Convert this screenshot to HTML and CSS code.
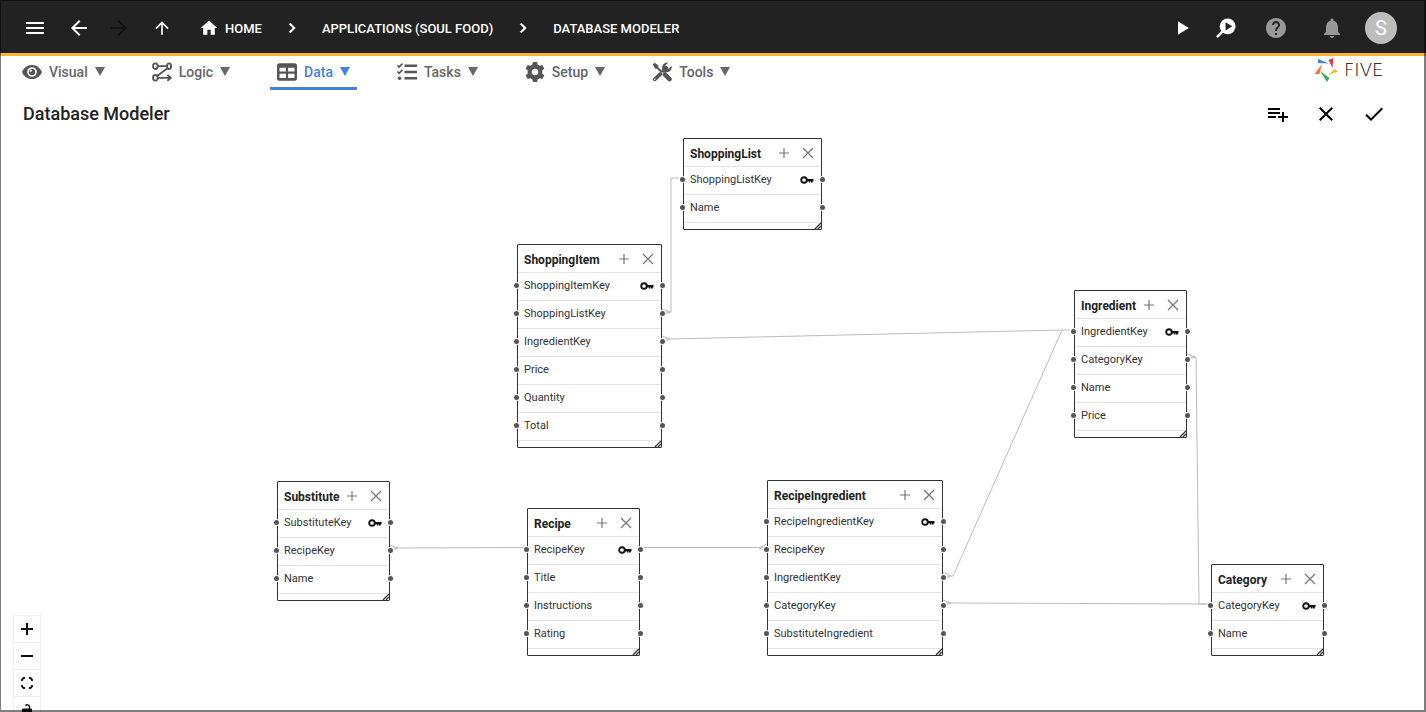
FILE: index.html
```html
<!DOCTYPE html>
<html lang="en">
<head>
<meta charset="utf-8">
<meta name="viewport" content="width=device-width, initial-scale=1">
<title>Database Modeler</title>
<link rel="stylesheet" href="styles.css">
</head>
<body>
<svg class="sprite" aria-hidden="true">
  <symbol id="i-menu" viewBox="0 0 24 24"><path d="M3 18h18v-2H3v2zm0-5h18v-2H3v2zm0-7v2h18V6H3z"/></symbol>
  <symbol id="i-back" viewBox="0 0 24 24"><path d="M20 11H7.83l5.59-5.59L12 4l-8 8 8 8 1.41-1.41L7.83 13H20v-2z"/></symbol>
  <symbol id="i-forward" viewBox="0 0 24 24"><path d="M12 4l-1.410 1.410L16.170 11H4v2h12.170l-5.580 5.590L12 20l8-8z"/></symbol>
  <symbol id="i-up" viewBox="0 0 24 24"><path d="M4 12l1.410 1.410L11 7.830V20h2V7.830l5.580 5.590L20 12l-8-8-8 8z"/></symbol>
  <symbol id="i-home" viewBox="0 0 24 24"><path d="M10 20v-6h4v6h5v-8h3L12 3 2 12h3v8z"/></symbol>
  <symbol id="i-chevron" viewBox="0 0 24 24"><path d="M10 6L8.590 7.410 13.170 12l-4.580 4.590L10 18l6-6z" stroke="currentColor" stroke-width=".6"/></symbol>
  <symbol id="i-play" viewBox="0 0 24 24"><path d="M6 4v16l13-8z"/></symbol>
  <symbol id="i-inspect" viewBox="0 0 24 24"><circle cx="14" cy="10" r="9.500"/><path d="M8 16l-6 6" stroke="currentColor" stroke-width="3" stroke-linecap="round"/><path d="M11.500 5l8 5-8 5z" fill="#222"/></symbol>
  <symbol id="i-help" viewBox="0 0 24 24"><path d="M12 2C6.480 2 2 6.480 2 12s4.480 10 10 10 10-4.480 10-10S17.520 2 12 2zm1 17h-2v-2h2v2zm2.070-7.750l-.9.920C13.450 12.900 13 13.500 13 15h-2v-.5c0-1.100.450-2.100 1.170-2.830l1.240-1.260c.370-.360.590-.860.590-1.410 0-1.100-.9-2-2-2s-2 .9-2 2H8c0-2.210 1.790-4 4-4s4 1.790 4 4c0 .880-.360 1.680-.930 2.250z"/></symbol>
  <symbol id="i-bell" viewBox="0 0 24 24"><path d="M12 22c1.100 0 2-.9 2-2h-4c0 1.100.9 2 2 2zm6-6v-5c0-3.070-1.640-5.640-4.500-6.320V4c0-.830-.670-1.500-1.500-1.500s-1.500.670-1.500 1.500v.680C7.630 5.360 6 7.920 6 11v5l-2 2v1h16v-1l-2-2z"/></symbol>
  <symbol id="i-eye" viewBox="0 0 24 24"><path fill-rule="evenodd" d="M12 3.500C6 3.500 1.800 7.600 0 12c1.800 4.400 6 8.500 12 8.500S22.200 16.400 24 12C22.200 7.600 18 3.500 12 3.500zm0 2.700a5.800 5.800 0 1 1 0 11.600 5.800 5.800 0 0 1 0-11.600z"/><circle cx="12" cy="12" r="3.800"/><circle cx="10.500" cy="10.500" r="1.400" fill="#fff"/></symbol>
  <symbol id="i-logic" viewBox="0 0 24 24"><g fill="none" stroke="currentColor" stroke-width="2.200"><ellipse cx="4" cy="5" rx="2.800" ry="3.400"/><ellipse cx="20.500" cy="5" rx="2.400" ry="3.400"/><ellipse cx="4" cy="19" rx="2.800" ry="3.400"/><path d="M7 5h11M18.500 7.500L6.500 16.500M7 19h15M18.500 15.500L22.500 19l-4 3.500"/></g></symbol>
  <symbol id="i-table" viewBox="0 0 24 24"><path fill-rule="evenodd" d="M3 1.500h18a3 3 0 0 1 3 3v15a3 3 0 0 1-3 3H3a3 3 0 0 1-3-3v-15a3 3 0 0 1 3-3zM3 7v4.500h7.700V7zm10.300 0v4.500H21V7zM3 14.200v5h7.700v-5zm10.300 0v5H21v-5z"/></symbol>
  <symbol id="i-tasks" viewBox="0 0 24 24"><path d="M9 3h15v3H9zM9 10.500h15v3H9zM9 18h15v3H9z"/><circle cx="3" cy="19.500" r="2.200"/><path d="M.5 4l2 2L6.500 2M.5 11.500l2 2 4-4" fill="none" stroke="currentColor" stroke-width="2"/></symbol>
  <symbol id="i-gear" viewBox="0 0 24 24"><path fill-rule="evenodd" d="M9.500 0h5l.7 3.300 2.300 1.300 3.200-1 2.500 4.300-2.500 2.300v3.600l2.500 2.300-2.500 4.300-3.200-1-2.300 1.300-.7 3.300h-5l-.7-3.300-2.300-1.300-3.200 1L.8 16.100l2.500-2.300v-3.600L.8 7.900l2.500-4.300 3.200 1 2.300-1.300zM12 8a4 4 0 1 0 0 8 4 4 0 0 0 0-8z"/></symbol>
  <symbol id="i-tools" viewBox="0 0 24 24"><path d="M1 3l2.200-2.200L7.500 4v2.300l5 5-1.700 1.700-5-5H3.700z"/><path d="M15.500 15l5.500 5.500" stroke="currentColor" stroke-width="5.500" stroke-linecap="round"/><path d="M3.200 20.800L10 14.500M13.500 10.500L17 7" stroke="currentColor" stroke-width="4.500" stroke-linecap="round"/><path d="M19.500.8a6 6 0 0 0-7 7.700l3 3.500a6.200 6.200 0 0 0 8-7.300l-3.700 3.500-3.200-.8-.7-3.200z"/><circle cx="3.300" cy="20.700" r="1" fill="#fff"/></symbol>
  <symbol id="i-listadd" viewBox="0 0 24 24"><path d="M14 10H2v2h12v-2zm0-4H2v2h12V6zm4 8v-4h-2v4h-4v2h4v4h2v-4h4v-2h-4zM2 16h8v-2H2v2z"/></symbol>
  <symbol id="i-close" viewBox="0 0 24 24"><path d="M19 6.410L17.590 5 12 10.590 6.410 5 5 6.410 10.590 12 5 17.590 6.410 19 12 13.410 17.590 19 19 17.590 13.410 12z"/></symbol>
  <symbol id="i-check" viewBox="0 0 24 24"><path d="M9 16.170L4.830 12l-1.420 1.410L9 19 21 7l-1.410-1.410z"/></symbol>
  <symbol id="i-plus" viewBox="0 0 12 12"><path d="M6 1v10M1 6h10" stroke="currentColor" stroke-width="1.200" fill="none"/></symbol>
  <symbol id="i-x" viewBox="0 0 12 12"><path d="M1 1l10 10M11 1L1 11" stroke="currentColor" stroke-width="1.300" fill="none"/></symbol>
  <symbol id="i-key" viewBox="0 0 14 10"><circle cx="4" cy="5" r="2.800" fill="none" stroke="currentColor" stroke-width="1.900"/><path d="M6.500 4H13.500v2.200h-.7v1.300h-2V6.200h-.6v1.300H8.800V6.200H6.500z"/></symbol>
  <symbol id="i-grip" viewBox="0 0 8 8"><path d="M2 8L8 2M5 8L8 5" stroke="currentColor" stroke-width="1.200" fill="none"/></symbol>
</svg>

<div class="app">
  <header class="topbar">
    <button class="bar-btn" aria-label="Menu"><svg><use href="#i-menu"/></svg></button>
    <button class="bar-btn back" aria-label="Back"><svg><use href="#i-back"/></svg></button>
    <button class="bar-btn forward" aria-label="Forward" disabled><svg><use href="#i-forward"/></svg></button>
    <button class="bar-btn up" aria-label="Up"><svg><use href="#i-up"/></svg></button>
    <nav class="crumbs" aria-label="Breadcrumb">
      <a href="#" class="crumb"><svg><use href="#i-home"/></svg>HOME</a>
      <svg class="sep"><use href="#i-chevron"/></svg>
      <a href="#" class="crumb">APPLICATIONS (SOUL FOOD)</a>
      <svg class="sep"><use href="#i-chevron"/></svg>
      <a href="#" class="crumb">DATABASE MODELER</a>
    </nav>
    <div class="bar-actions">
      <button class="bar-btn small" aria-label="Run"><svg><use href="#i-play"/></svg></button>
      <button class="bar-btn small inspect" aria-label="Inspect"><svg><use href="#i-inspect"/></svg></button>
      <button class="bar-btn muted" aria-label="Help"><svg><use href="#i-help"/></svg></button>
      <button class="bar-btn muted bell" aria-label="Notifications"><svg><use href="#i-bell"/></svg></button>
      <button class="avatar" aria-label="Account">S</button>
    </div>
  </header>

  <div class="menubar">
    <nav class="tabs" aria-label="Main">
      <button class="tab"><svg><use href="#i-eye"/></svg><span>Visual</span><i class="caret"></i></button>
      <button class="tab"><svg><use href="#i-logic"/></svg><span>Logic</span><i class="caret"></i></button>
      <button class="tab active"><svg><use href="#i-table"/></svg><span>Data</span><i class="caret"></i></button>
      <button class="tab"><svg><use href="#i-tasks"/></svg><span>Tasks</span><i class="caret"></i></button>
      <button class="tab"><svg><use href="#i-gear"/></svg><span>Setup</span><i class="caret"></i></button>
      <button class="tab"><svg><use href="#i-tools"/></svg><span>Tools</span><i class="caret"></i></button>
    </nav>
    <div class="brand">
      <svg viewBox="0 0 24 24" aria-hidden="true">
        <path fill="#3f83d8" d="M4 1l11 4.500L4 5z"/>
        <path fill="#e23b3b" d="M14.500 2L19.500 0 18.500 10z"/>
        <path fill="#fdb62b" d="M21 11l3 2.500-10.500 3.500z"/>
        <path fill="#3fa75a" d="M6 13l9.500 7-2.500 4z"/>
        <path fill="#f47b2d" d="M8 6L5.500 16H.5z"/>
      </svg>
      <span>FIVE</span>
    </div>
  </div>

  <div class="titlebar">
    <h1>Database Modeler</h1>
    <div class="title-actions">
      <button class="act" aria-label="Add table"><svg><use href="#i-listadd"/></svg></button>
      <button class="act" aria-label="Cancel"><svg><use href="#i-close"/></svg></button>
      <button class="act" aria-label="Save"><svg><use href="#i-check"/></svg></button>
    </div>
  </div>

  <main class="canvas">
    <svg class="edges" aria-hidden="true">
      <path d="M682 40H671V174H662M662 171l8 3-8 3"/>
      <path d="M662 201H670L1062 192H1074M662 198l8 3-8 3"/>
      <path d="M943 438H953L1062 192M943 434l8 4-8 3"/>
      <path d="M1187 219H1196L1199 466H1211M1187 216l8 3-8 3"/>
      <path d="M390 410H398L527 409.500M390 407l8 3-8 3"/>
      <path d="M640 409.500H767M767 406l-8 4 8 3"/>
      <path d="M943 465H951L1211 466M943 462l8 3-8 3"/>
    </svg>

    <section class="node shopping-list">
      <header><h2>ShoppingList</h2><button aria-label="Add field"><svg><use href="#i-plus"/></svg></button><button aria-label="Remove table"><svg><use href="#i-x"/></svg></button></header>
      <ul><li>ShoppingListKey<svg><use href="#i-key"/></svg></li><li>Name</li></ul>
      <svg class="grip"><use href="#i-grip"/></svg>
    </section>
    <section class="node shopping-item">
      <header><h2>ShoppingItem</h2><button aria-label="Add field"><svg><use href="#i-plus"/></svg></button><button aria-label="Remove table"><svg><use href="#i-x"/></svg></button></header>
      <ul><li>ShoppingItemKey<svg><use href="#i-key"/></svg></li><li>ShoppingListKey</li><li>IngredientKey</li><li>Price</li><li>Quantity</li><li>Total</li></ul>
      <svg class="grip"><use href="#i-grip"/></svg>
    </section>
    <section class="node ingredient">
      <header><h2>Ingredient</h2><button aria-label="Add field"><svg><use href="#i-plus"/></svg></button><button aria-label="Remove table"><svg><use href="#i-x"/></svg></button></header>
      <ul><li>IngredientKey<svg><use href="#i-key"/></svg></li><li>CategoryKey</li><li>Name</li><li>Price</li></ul>
      <svg class="grip"><use href="#i-grip"/></svg>
    </section>
    <section class="node substitute">
      <header><h2>Substitute</h2><button aria-label="Add field"><svg><use href="#i-plus"/></svg></button><button aria-label="Remove table"><svg><use href="#i-x"/></svg></button></header>
      <ul><li>SubstituteKey<svg><use href="#i-key"/></svg></li><li>RecipeKey</li><li>Name</li></ul>
      <svg class="grip"><use href="#i-grip"/></svg>
    </section>
    <section class="node recipe">
      <header><h2>Recipe</h2><button aria-label="Add field"><svg><use href="#i-plus"/></svg></button><button aria-label="Remove table"><svg><use href="#i-x"/></svg></button></header>
      <ul><li>RecipeKey<svg><use href="#i-key"/></svg></li><li>Title</li><li>Instructions</li><li>Rating</li></ul>
      <svg class="grip"><use href="#i-grip"/></svg>
    </section>
    <section class="node recipe-ingredient">
      <header><h2>RecipeIngredient</h2><button aria-label="Add field"><svg><use href="#i-plus"/></svg></button><button aria-label="Remove table"><svg><use href="#i-x"/></svg></button></header>
      <ul><li>RecipeIngredientKey<svg><use href="#i-key"/></svg></li><li>RecipeKey</li><li>IngredientKey</li><li>CategoryKey</li><li>SubstituteIngredient</li></ul>
      <svg class="grip"><use href="#i-grip"/></svg>
    </section>
    <section class="node category">
      <header><h2>Category</h2><button aria-label="Add field"><svg><use href="#i-plus"/></svg></button><button aria-label="Remove table"><svg><use href="#i-x"/></svg></button></header>
      <ul><li>CategoryKey<svg><use href="#i-key"/></svg></li><li>Name</li></ul>
      <svg class="grip"><use href="#i-grip"/></svg>
    </section>

    <div class="zoom">
      <button aria-label="Zoom in"><svg viewBox="0 0 12 12"><path d="M6 0v12M0 6h12" stroke-width="2"/></svg></button>
      <button aria-label="Zoom out"><svg viewBox="0 0 12 12"><path d="M0 6h12" stroke-width="2"/></svg></button>
      <button aria-label="Fit view"><svg viewBox="0 0 12 12"><path d="M1 4V2.500L2.500 1H4M8 1h1.500L11 2.500V4M11 8v1.500L9.500 11H8M4 11H2.500L1 9.500V8" stroke-width="1.800"/></svg></button>
      <button aria-label="Unlock"><svg viewBox="0 0 12 12"><path d="M4.500 1.500C5.500.2 8.500.5 8.500 3V5" stroke-width="1.400"/><path d="M1.500 5h9v7h-9z" fill="#111"/></svg></button>
    </div>
  </main>
</div>
</body>
</html>
```
FILE: styles.css
```css
* { box-sizing: border-box; }

body {
  margin: 0;
  font-family: Roboto, "Liberation Sans", sans-serif;
  color: #222;
  background: #fff;
}

button {
  padding: 0;
  border: 0;
  background: none;
  color: inherit;
  font: inherit;
}

svg { display: block; fill: currentColor; flex: none; }

.sprite { position: absolute; width: 0; height: 0; }

.app {
  position: relative;
  display: flex;
  flex-direction: column;
  height: 100vh;
  overflow: hidden;
}

.app::after {
  content: "";
  position: absolute;
  inset: 0;
  border: solid rgba(0, 0, 0, 0.5);
  border-width: 1px 2px 2px 1px;
  pointer-events: none;
}

/* Top bar */
.topbar {
  display: flex;
  align-items: center;
  height: 56px;
  padding: 3px 29px 0 23px;
  background: #222;
  border-bottom: 3px solid #fdb62b;
  color: #fff;
}

.bar-btn svg { width: 24px; height: 24px; }
.bar-btn.back { margin-left: 20px; }
.bar-btn.forward { margin-left: 16px; color: #111; }
.bar-btn.up { margin-left: 21px; }
.bar-btn.up svg { width: 20px; height: 20px; }
.bar-btn.small svg { width: 20px; height: 20px; }
.bar-btn.muted { color: #999; }

.crumbs {
  display: flex;
  align-items: center;
  margin-left: 27px;
  font-size: 13px;
  font-weight: 500;
}

.crumb {
  display: flex;
  align-items: center;
  gap: 6px;
  color: #fff;
  text-decoration: none;
}

.crumb svg { width: 20px; height: 20px; }
.sep { width: 20px; height: 20px; margin: 0 20px; }

.bar-actions { display: flex; align-items: center; margin-left: auto; }
.bar-actions .inspect { margin-left: 23px; }
.bar-actions .muted { margin-left: 28px; }
.bar-actions .bell { margin-left: 32px; }

.avatar {
  width: 32px;
  height: 32px;
  margin-left: 21px;
  border-radius: 50%;
  background: #bdbdbd;
  color: #fff;
  font-size: 20px;
  line-height: 32px;
}

/* Menu */
.menubar {
  display: flex;
  align-items: flex-start;
  justify-content: space-between;
  height: 34px;
  padding: 0 24px 0 15px;
}

.tabs { display: flex; gap: 33px; }

.tab {
  display: flex;
  align-items: center;
  height: 34px;
  padding: 0 7px;
  border-bottom: 3px solid transparent;
  border-radius: 1px;
  color: #666;
  font-size: 14px;
  font-weight: 500;
}

.tab svg { width: 20px; height: 20px; margin-right: 7px; color: #555; }

.tab.active { color: #4285d8; border-bottom-color: #4285d8; }

.caret {
  margin-left: 7px;
  border: solid transparent;
  border-width: 9px 5px 0;
  border-top-color: currentColor;
}

.brand { display: flex; align-items: center; gap: 6px; height: 28px; color: #000; }
.brand svg { width: 24px; height: 24px; }
.brand span { width: 58px; font: 200 18px/20px "DejaVu Sans", sans-serif; }

/* Title row */
.titlebar {
  display: flex;
  align-items: center;
  justify-content: space-between;
  height: 48px;
  padding: 0 40px 0 23px;
}

.titlebar h1 { margin: 0; font-size: 18px; font-weight: 500; line-height: 24px; }
.title-actions { display: flex; gap: 24px; color: #000; }
.act svg { width: 24px; height: 24px; }

/* Diagram */
.canvas { position: relative; flex: 1; min-height: 0; overflow: hidden; }

.edges {
  position: absolute;
  inset: 0;
  width: 100%;
  height: 100%;
  fill: none;
  stroke: #bcbcc0;
}

.node {
  position: absolute;
  border: 1px solid #333;
  border-radius: 1px;
  background: #fff;
  padding-bottom: 6px;
}

.shopping-list { left: 683px; top: 0; width: 139px; }
.shopping-item { left: 517px; top: 106px; width: 145px; }
.ingredient { left: 1074px; top: 152px; width: 113px; }
.substitute { left: 277px; top: 343px; width: 113px; }
.recipe { left: 527px; top: 370px; width: 113px; }
.recipe-ingredient { left: 767px; top: 342px; width: 176px; }
.category { left: 1211px; top: 426px; width: 113px; }

.node header {
  display: flex;
  align-items: center;
  gap: 12px;
  height: 28px;
  padding: 0 7px 0 6px;
  border-bottom: 1px solid #e4e4e4;
  color: #777;
}

.node h2 {
  flex: 1;
  min-width: 0;
  margin: 0;
  padding-top: 2px;
  color: #222;
  font-size: 12px;
  font-weight: 700;
  line-height: 20px;
}

.node header svg { width: 12px; height: 12px; }

.node ul { margin: 0; padding: 0; list-style: none; }

.node li {
  position: relative;
  display: flex;
  align-items: center;
  justify-content: space-between;
  height: 28px;
  padding: 0 7px 2px 6px;
  border-bottom: 1px solid #e4e4e4;
  color: #333;
  font-size: 11px;
}

.node li svg { width: 14px; height: 10px; color: #111; }

.node li::before,
.node li::after {
  content: "";
  position: absolute;
  top: 10px;
  width: 5px;
  height: 5px;
  border-radius: 50%;
  background: #555;
  box-shadow: 0 0 0 1px #fff;
}

.node li::before { left: -4px; }
.node li::after { right: -4px; }

.grip { position: absolute; right: 0; bottom: 0; width: 8px; height: 8px; }

/* Zoom controls */
.zoom {
  position: absolute;
  left: 13px;
  bottom: -12px;
  border: solid #eee;
  border-width: 1px 1px 0;
  background: #fefefe;
}

.zoom button {
  display: flex;
  align-items: center;
  justify-content: center;
  width: 26px;
  height: 27px;
  border-bottom: 1px solid #eee;
}

.zoom svg { width: 12px; height: 12px; fill: none; stroke: #111; }
```
